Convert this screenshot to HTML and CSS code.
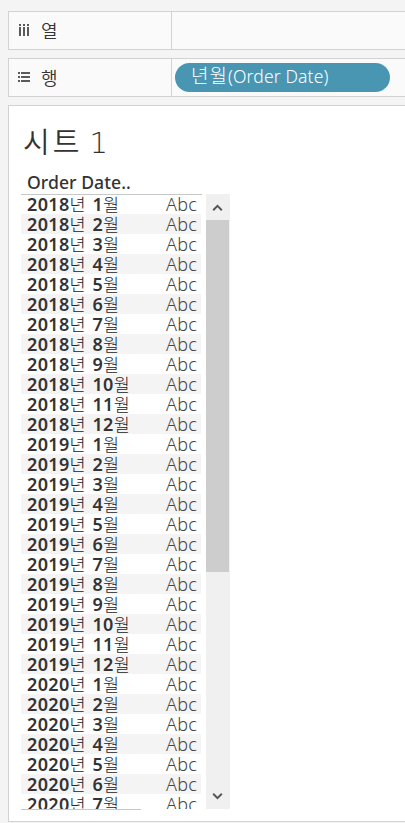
FILE: index.html
```
<!DOCTYPE html>
<html lang="ko">
<head>
<meta charset="utf-8">
<title>시트 1</title>
<link rel="stylesheet" href="styles.css">
</head>
<body>
<section class="shelf">
  <div class="shelf-label">
    <svg class="icon" width="12" height="12" viewBox="0 0 12 12" shape-rendering="crispEdges"><path d="M1 0h2v2H1zM5 0h2v2H5zM9 0h2v2H9zM1 3h2v9H1zM5 3h2v9H5zM9 3h2v9H9z"/></svg>
    <span class="shelf-name">열</span>
  </div>
  <div class="shelf-drop"></div>
</section>
<section class="shelf">
  <div class="shelf-label">
    <svg class="icon" width="12" height="12" viewBox="0 0 12 12" shape-rendering="crispEdges"><path d="M0 1h2v2H0zM0 5h2v2H0zM0 9h2v2H0zM3 1h9v2H3zM3 5h9v2H3zM3 9h9v2H3z"/></svg>
    <span class="shelf-name">행</span>
  </div>
  <div class="shelf-drop"><div class="pill"><span class="pill-ko">년월</span><span class="pill-en">(Order Date)</span></div></div>
</section>
<main class="sheet">
  <h1 class="title">시트 <span class="title-number">1</span></h1>
  <div class="column-header">Order Date..</div>
  <div class="view">
    <ul class="rows">
      <li><span class="month"><b>2018</b>년 <b>1</b>월</span><span class="mark">Abc</span></li>
      <li><span class="month"><b>2018</b>년 <b>2</b>월</span><span class="mark">Abc</span></li>
      <li><span class="month"><b>2018</b>년 <b>3</b>월</span><span class="mark">Abc</span></li>
      <li><span class="month"><b>2018</b>년 <b>4</b>월</span><span class="mark">Abc</span></li>
      <li><span class="month"><b>2018</b>년 <b>5</b>월</span><span class="mark">Abc</span></li>
      <li><span class="month"><b>2018</b>년 <b>6</b>월</span><span class="mark">Abc</span></li>
      <li><span class="month"><b>2018</b>년 <b>7</b>월</span><span class="mark">Abc</span></li>
      <li><span class="month"><b>2018</b>년 <b>8</b>월</span><span class="mark">Abc</span></li>
      <li><span class="month"><b>2018</b>년 <b>9</b>월</span><span class="mark">Abc</span></li>
      <li><span class="month"><b>2018</b>년 <b>10</b>월</span><span class="mark">Abc</span></li>
      <li><span class="month"><b>2018</b>년 <b>11</b>월</span><span class="mark">Abc</span></li>
      <li><span class="month"><b>2018</b>년 <b>12</b>월</span><span class="mark">Abc</span></li>
      <li><span class="month"><b>2019</b>년 <b>1</b>월</span><span class="mark">Abc</span></li>
      <li><span class="month"><b>2019</b>년 <b>2</b>월</span><span class="mark">Abc</span></li>
      <li><span class="month"><b>2019</b>년 <b>3</b>월</span><span class="mark">Abc</span></li>
      <li><span class="month"><b>2019</b>년 <b>4</b>월</span><span class="mark">Abc</span></li>
      <li><span class="month"><b>2019</b>년 <b>5</b>월</span><span class="mark">Abc</span></li>
      <li><span class="month"><b>2019</b>년 <b>6</b>월</span><span class="mark">Abc</span></li>
      <li><span class="month"><b>2019</b>년 <b>7</b>월</span><span class="mark">Abc</span></li>
      <li><span class="month"><b>2019</b>년 <b>8</b>월</span><span class="mark">Abc</span></li>
      <li><span class="month"><b>2019</b>년 <b>9</b>월</span><span class="mark">Abc</span></li>
      <li><span class="month"><b>2019</b>년 <b>10</b>월</span><span class="mark">Abc</span></li>
      <li><span class="month"><b>2019</b>년 <b>11</b>월</span><span class="mark">Abc</span></li>
      <li><span class="month"><b>2019</b>년 <b>12</b>월</span><span class="mark">Abc</span></li>
      <li><span class="month"><b>2020</b>년 <b>1</b>월</span><span class="mark">Abc</span></li>
      <li><span class="month"><b>2020</b>년 <b>2</b>월</span><span class="mark">Abc</span></li>
      <li><span class="month"><b>2020</b>년 <b>3</b>월</span><span class="mark">Abc</span></li>
      <li><span class="month"><b>2020</b>년 <b>4</b>월</span><span class="mark">Abc</span></li>
      <li><span class="month"><b>2020</b>년 <b>5</b>월</span><span class="mark">Abc</span></li>
      <li><span class="month"><b>2020</b>년 <b>6</b>월</span><span class="mark">Abc</span></li>
      <li><span class="month"><b>2020</b>년 <b>7</b>월</span><span class="mark">Abc</span></li>
    </ul>
    <div class="scrollbar">
      <svg class="arrow" width="24" height="26" viewBox="0 0 24 26"><path d="M7.2 16.2 11.5 11.9l4.3 4.3"/></svg>
      <div class="thumb"></div>
      <svg class="arrow arrow-down" width="24" height="26" viewBox="0 0 24 26"><path d="M7.2 10.8 11.5 15.1l4.3-4.3"/></svg>
    </div>
  </div>
  <div class="end-rule"></div>
</main>
</body>
</html>
```
FILE: styles.css
```
* { box-sizing: border-box; }

body {
  margin: 0;
  height: 823px;
  padding: 11px 0 0 8px;
  overflow: hidden;
  background: #f4f4f4;
  color: #333;
  font-family: "Noto Sans", "Noto Sans CJK KR", sans-serif;
}

.shelf {
  display: flex;
  height: 39px;
  margin-bottom: 8px;
  border: 1px solid #d2d2d2;
  border-right: 0;
  background: #fafafa;
}

.shelf-label {
  display: flex;
  align-items: center;
  width: 163px;
  padding-left: 9px;
  border-right: 1px solid #d2d2d2;
}

.icon { fill: #5a5a5a; margin-bottom: 1px; }

.shelf-name {
  margin-left: 11px;
  padding-bottom: 2px;
  font: 350 18px/30px "Noto Sans CJK KR", sans-serif;
}

.shelf-drop { flex: 1; padding: 4px 0 0 3px; }

.pill {
  width: 215px;
  height: 29px;
  padding-left: 16px;
  border-radius: 15px;
  background: #4996b2;
  color: #fff;
  font-size: 18px;
  line-height: 24px;
  white-space: nowrap;
}

.pill-ko { font: 300 19px/24px "Noto Sans CJK KR", sans-serif; letter-spacing: 1px; }
.pill-en { font: 300 17.5px/24px "Noto Sans", sans-serif; letter-spacing: 0.15px; }

.sheet {
  height: 717px;
  margin-top: 8px;
  padding: 15px 0 0 12px;
  border: 1px solid #d2d2d2;
  border-right: 0;
  background: #fff;
}

.title {
  height: 50px;
  margin: 0 0 0 2px;
  font: 350 29px/38px "Noto Sans CJK KR", sans-serif;
  letter-spacing: 3px;
}

.title-number {
  font-family: "DejaVu Sans Light", "DejaVu Sans ExtraLight", "DejaVu Sans", sans-serif;
  font-size: 29px;
  font-weight: 200;
  margin-left: -4px;
}

.column-header {
  width: 181px;
  height: 24px;
  padding-left: 6px;
  border-bottom: 1px solid #c8c8c8;
  font-size: 17.6px;
  font-weight: 500;
  line-height: 22px;
  letter-spacing: 0.05px;
}

.view { display: flex; gap: 5px; height: 615px; margin-top: -1px; }

.rows {
  width: 180px;
  height: 615px;
  margin: 0;
  padding: 0;
  overflow: hidden;
  list-style: none;
}

.rows li {
  display: flex;
  justify-content: space-between;
  height: 20px;
  padding: 0 4px 0 6px;
  white-space: nowrap;
}

.rows li:nth-child(even) { background: #f4f4f4; }

.month { font: 300 17.5px/20px "Noto Sans CJK KR", sans-serif; letter-spacing: 0.9px; color: #222; }
.month b { font: 600 18px/20px "Noto Sans", sans-serif; letter-spacing: 0.35px; color: #333; }
.mark { font: 300 18px/20px "Noto Sans", sans-serif; letter-spacing: 0.2px; color: #444; }

.scrollbar {
  display: flex;
  flex-direction: column;
  width: 24px;
  background: #f0f0f0;
}

.thumb { width: 23px; height: 352px; background: #cdcdcd; }
.arrow { fill: none; stroke: #555; stroke-width: 2; }
.arrow-down { margin-top: auto; }

.end-rule { width: 120px; height: 1px; background: #c8c8c8; }
```
